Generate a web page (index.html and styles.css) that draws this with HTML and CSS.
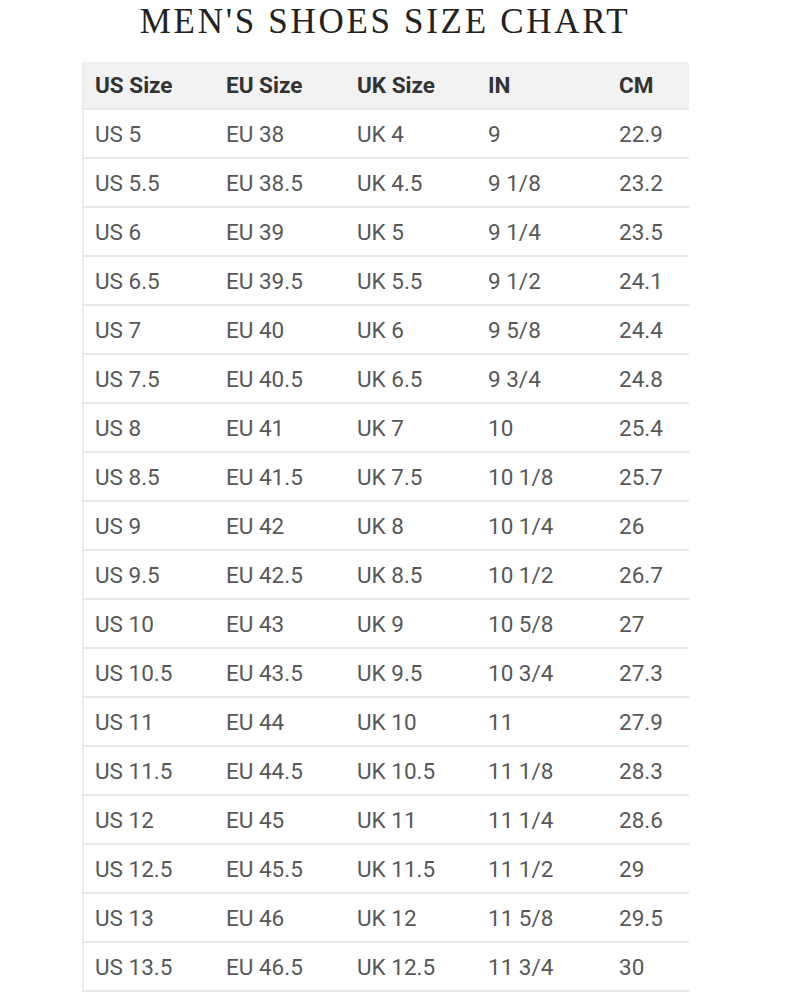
FILE: index.html
```html
<!DOCTYPE html>
<html>
<head>
<meta charset="utf-8">
<link rel="stylesheet" href="styles.css">
</head>
<body>
<h1 class="title">MEN'S SHOES SIZE CHART</h1>
<table class="chart">
<thead>
<tr><th>US Size</th><th>EU Size</th><th>UK Size</th><th>IN</th><th>CM</th></tr>
</thead>
<tbody>
<tr><td>US 5</td><td>EU 38</td><td>UK 4</td><td>9</td><td>22.9</td></tr>
<tr><td>US 5.5</td><td>EU 38.5</td><td>UK 4.5</td><td>9 1/8</td><td>23.2</td></tr>
<tr><td>US 6</td><td>EU 39</td><td>UK 5</td><td>9 1/4</td><td>23.5</td></tr>
<tr><td>US 6.5</td><td>EU 39.5</td><td>UK 5.5</td><td>9 1/2</td><td>24.1</td></tr>
<tr><td>US 7</td><td>EU 40</td><td>UK 6</td><td>9 5/8</td><td>24.4</td></tr>
<tr><td>US 7.5</td><td>EU 40.5</td><td>UK 6.5</td><td>9 3/4</td><td>24.8</td></tr>
<tr><td>US 8</td><td>EU 41</td><td>UK 7</td><td>10</td><td>25.4</td></tr>
<tr><td>US 8.5</td><td>EU 41.5</td><td>UK 7.5</td><td>10 1/8</td><td>25.7</td></tr>
<tr><td>US 9</td><td>EU 42</td><td>UK 8</td><td>10 1/4</td><td>26</td></tr>
<tr><td>US 9.5</td><td>EU 42.5</td><td>UK 8.5</td><td>10 1/2</td><td>26.7</td></tr>
<tr><td>US 10</td><td>EU 43</td><td>UK 9</td><td>10 5/8</td><td>27</td></tr>
<tr><td>US 10.5</td><td>EU 43.5</td><td>UK 9.5</td><td>10 3/4</td><td>27.3</td></tr>
<tr><td>US 11</td><td>EU 44</td><td>UK 10</td><td>11</td><td>27.9</td></tr>
<tr><td>US 11.5</td><td>EU 44.5</td><td>UK 10.5</td><td>11 1/8</td><td>28.3</td></tr>
<tr><td>US 12</td><td>EU 45</td><td>UK 11</td><td>11 1/4</td><td>28.6</td></tr>
<tr><td>US 12.5</td><td>EU 45.5</td><td>UK 11.5</td><td>11 1/2</td><td>29</td></tr>
<tr><td>US 13</td><td>EU 46</td><td>UK 12</td><td>11 5/8</td><td>29.5</td></tr>
<tr><td>US 13.5</td><td>EU 46.5</td><td>UK 12.5</td><td>11 3/4</td><td>30</td></tr>
</tbody>
</table>
</body>
</html>
```
FILE: styles.css
```css
html, body {
  margin: 0;
  padding: 0;
  background: #ffffff;
}
body {
  width: 794px;
  height: 1002px;
  overflow: hidden;
}
.title {
  margin: 0;
  padding: 2px 24px 0 0;
  height: 59px;
  box-sizing: border-box;
  text-align: center;
  font-family: "Liberation Serif", "DejaVu Serif", serif;
  font-weight: normal;
  font-size: 35px;
  letter-spacing: 2.7px;
  color: #222222;
  line-height: 40px;
}
.chart {
  margin-left: 82px;
  margin-top: 3px;
  width: 607px;
  border-collapse: collapse;
  table-layout: fixed;
  font-family: Roboto, "Liberation Sans", sans-serif;
  font-size: 22.5px;
  border-left: 2px solid #ececec;
}
.chart th, .chart td {
  text-align: left;
  padding: 0 0 0 11px;
  height: 47px;
  border-bottom: 2px solid #e8e8e8;
  white-space: nowrap;
}
.chart th:nth-child(-n+4), .chart td:nth-child(-n+4) {
  width: 120px;
}
.chart th {
  background: #f2f2f2;
  color: #333333;
  font-weight: bold;
  height: 46px;
}
.chart td {
  color: #585858;
  font-weight: normal;
}
```
